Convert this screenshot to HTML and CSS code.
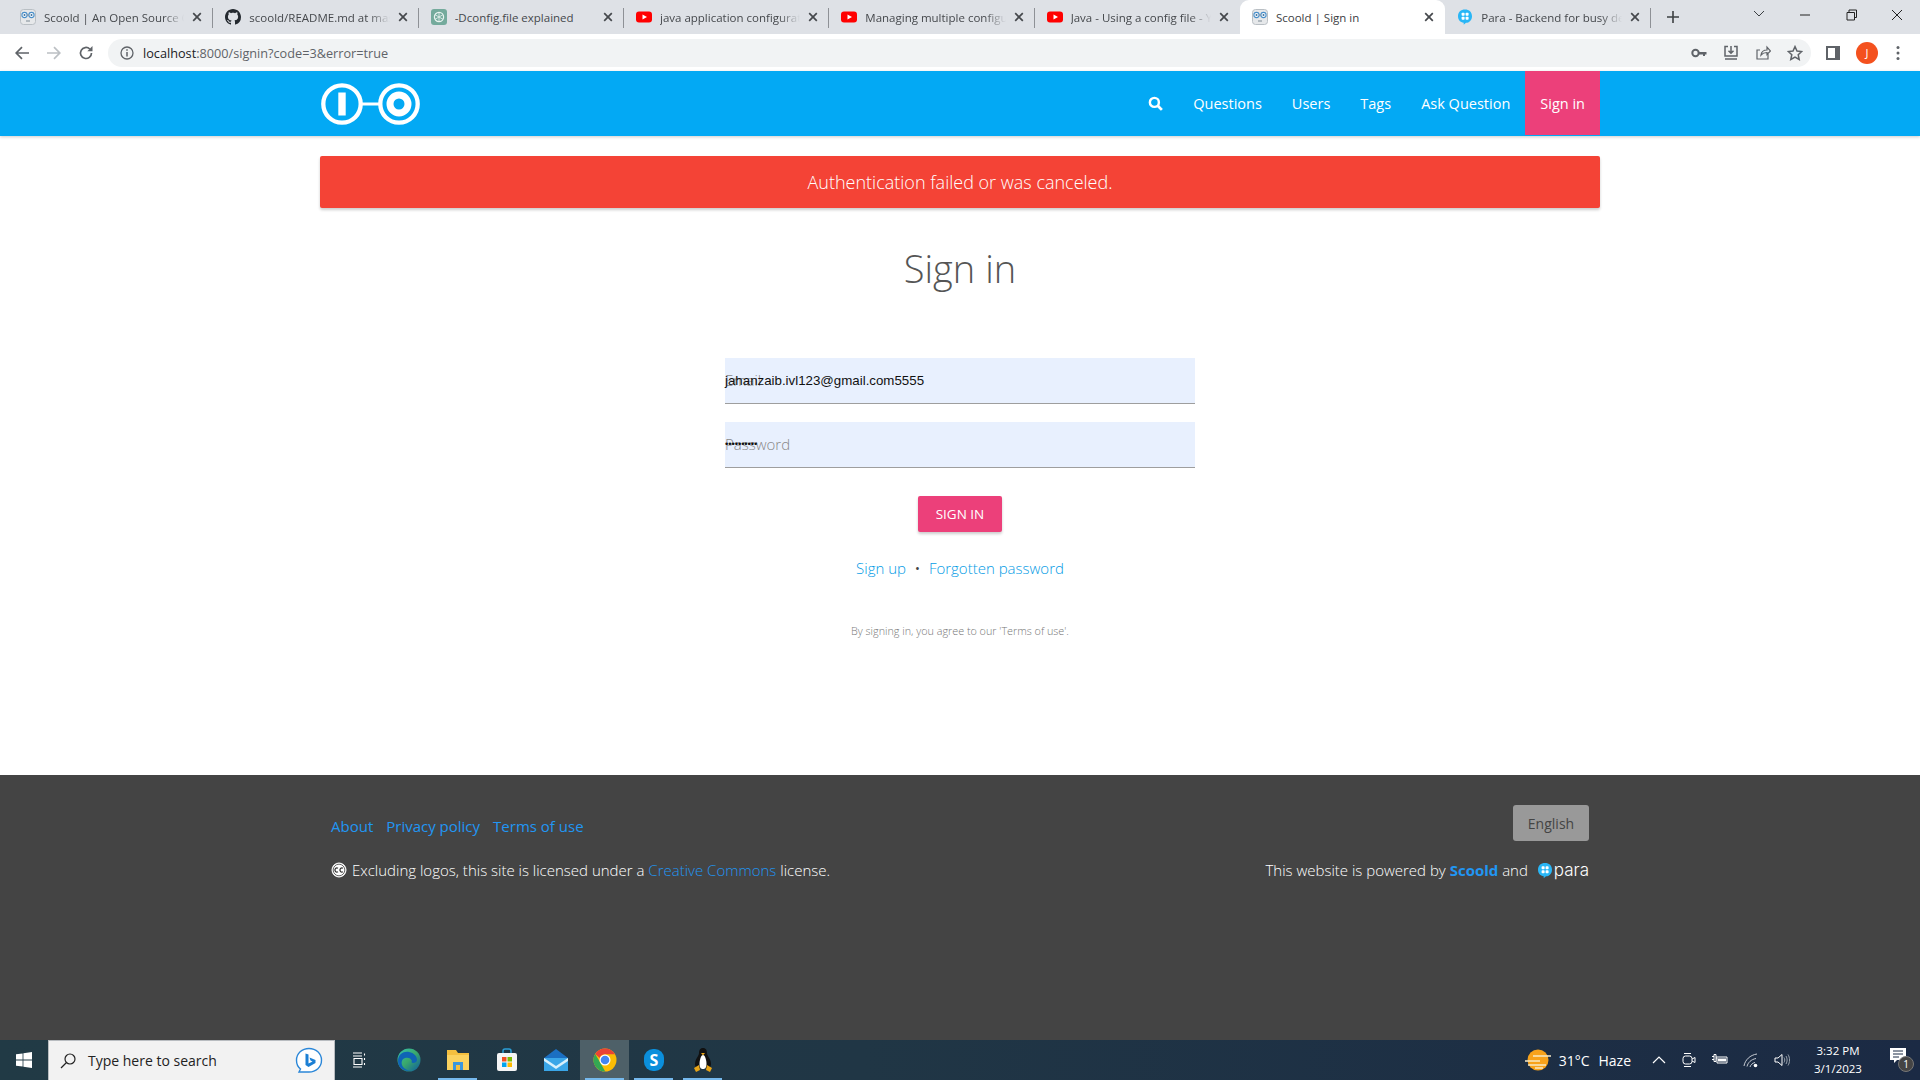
FILE: index.html
```html
<!DOCTYPE html>
<html lang="en">
<head>
<meta charset="utf-8">
<title>Scoold | Sign in</title>
<link rel="stylesheet" href="styles.css">
</head>
<body>
<svg class="defs" width="0" height="0" aria-hidden="true">
  <symbol id="scoold" viewBox="0 0 16 16">
    <rect x="0.5" y="0.5" width="15" height="15" rx="3" fill="#e6e8ea" stroke="#b9bfc4"/>
    <circle cx="4.5" cy="6" r="2.6" fill="#fff" stroke="#4a8fc9" stroke-width="1.1"/>
    <circle cx="11.5" cy="6" r="2.6" fill="#fff" stroke="#4a8fc9" stroke-width="1.1"/>
    <circle cx="4.5" cy="6" r="1" fill="#3d6f9b"/><circle cx="11.5" cy="6" r="1" fill="#3d6f9b"/>
    <path d="M7 6h2M6 12h4" stroke="#7d8a94" stroke-width="1"/>
  </symbol>
  <symbol id="yt" viewBox="0 0 16 16">
    <rect x="0" y="2.5" width="16" height="11" rx="3" fill="#f00"/>
    <path d="M6.5 5.5 11 8l-4.500 2.500z" fill="#fff"/>
  </symbol>
  <symbol id="x" viewBox="0 0 10 10">
    <path d="M1.200 1.200l7.600 7.600M8.800 1.200l-7.600 7.600" stroke="#45484c" stroke-width="1.700" fill="none"/>
  </symbol>
  <symbol id="bubble" viewBox="0 0 16 16">
    <path d="M8 0.500c4.200 0 7 2.700 7 6.700s-2.800 6.600-6 6.600l-2.300 2v-2.100C3.300 13.300 1 11 1 7.200 1 3.200 3.800 0.500 8 0.500z" fill="#29b6f6"/>
    <rect x="4.600" y="3.700" width="3" height="3" rx=".8" fill="#fff"/><rect x="8.600" y="3.700" width="3" height="3" rx=".8" fill="#fff"/>
    <rect x="4.600" y="7.700" width="3" height="3" rx=".8" fill="#fff"/><rect x="8.600" y="7.700" width="3" height="3" rx=".8" fill="#fff"/>
  </symbol>
</svg>

<div class="app">
  <header class="tabstrip">
    <div class="tab"><svg class="fav"><use href="#scoold"/></svg><span class="tab-title">Scoold | An Open Source Q&amp;A</span><svg class="tab-x"><use href="#x"/></svg></div>
    <div class="tab"><svg class="fav" viewBox="0 0 16 16"><path fill="#24292f" d="M8 0C3.580 0 0 3.580 0 8c0 3.540 2.290 6.530 5.470 7.590.4.070.55-.17.55-.38 0-.19-.01-.82-.01-1.490-2.010.37-2.530-.49-2.690-.94-.09-.23-.48-.94-.82-1.130-.28-.15-.68-.52-.01-.53.63-.01 1.080.58 1.230.82.720 1.210 1.870.87 2.330.66.070-.52.280-.87.510-1.070-1.780-.2-3.640-.89-3.640-3.950 0-.87.310-1.590.820-2.150-.08-.2-.36-1.020.080-2.120 0 0 .67-.21 2.200.82.640-.18 1.320-.27 2-.27.680 0 1.360.09 2 .27 1.530-1.040 2.200-.82 2.200-.82.440 1.100.160 1.920.080 2.120.510.56.820 1.270.820 2.150 0 3.070-1.870 3.750-3.650 3.950.290.25.540.73.540 1.480 0 1.070-.01 1.930-.01 2.200 0 .21.150.46.550.38A8.013 8.013 0 0016 8c0-4.420-3.580-8-8-8z"/></svg><span class="tab-title">scoold/README.md at master</span><svg class="tab-x"><use href="#x"/></svg></div>
    <div class="tab"><svg class="fav" viewBox="0 0 16 16"><rect width="16" height="16" rx="3" fill="#74aa9c"/><circle cx="8" cy="8" r="4.600" fill="none" stroke="#e9f3f0" stroke-width="1.200"/><path d="M8 3.400v9.200M4 5.700l8 4.600M12 5.700l-8 4.600" stroke="#e9f3f0" stroke-width=".8"/></svg><span class="tab-title plain">-Dconfig.file explained</span><svg class="tab-x"><use href="#x"/></svg></div>
    <div class="tab"><svg class="fav"><use href="#yt"/></svg><span class="tab-title">java application configuration</span><svg class="tab-x"><use href="#x"/></svg></div>
    <div class="tab"><svg class="fav"><use href="#yt"/></svg><span class="tab-title">Managing multiple configuration</span><svg class="tab-x"><use href="#x"/></svg></div>
    <div class="tab no-sep"><svg class="fav"><use href="#yt"/></svg><span class="tab-title">Java - Using a config file - YouTube</span><svg class="tab-x"><use href="#x"/></svg></div>
    <div class="tab active"><svg class="fav"><use href="#scoold"/></svg><span class="tab-title plain">Scoold | Sign in</span><svg class="tab-x"><use href="#x"/></svg></div>
    <div class="tab"><svg class="fav"><use href="#bubble"/></svg><span class="tab-title">Para - Backend for busy developers</span><svg class="tab-x"><use href="#x"/></svg></div>
    <svg class="newtab" viewBox="0 0 12 12"><path d="M6 0v12M0 6h12" stroke="#3c4043" stroke-width="1.600"/></svg>
    <div class="win-controls">
      <svg class="win-btn" viewBox="0 0 46 30"><path d="M18 11l5 5 5-5" fill="none" stroke="#3c4043" stroke-width="1"/></svg>
      <svg class="win-btn" viewBox="0 0 46 30"><path d="M18 15h10" stroke="#222" stroke-width="1"/></svg>
      <svg class="win-btn" viewBox="0 0 46 30"><path d="M19 12.500h7.500V20H19zM21 12.500V10h7.500v7.500h-2" fill="none" stroke="#222" stroke-width="1"/></svg>
      <svg class="win-btn" viewBox="0 0 46 30"><path d="M18 10l10 10M28 10L18 20" stroke="#222" stroke-width="1"/></svg>
    </div>
  </header>

  <div class="toolbar">
    <svg class="tb-icon" viewBox="0 0 16 16"><path d="M15 8H2.500M8 2.200 2.200 8 8 13.800" fill="none" stroke="#5f6368" stroke-width="1.700"/></svg>
    <svg class="tb-icon" viewBox="0 0 16 16"><path d="M1 8h12.500M8 2.200 13.800 8 8 13.800" fill="none" stroke="#bcc0c4" stroke-width="1.700"/></svg>
    <svg class="tb-icon" viewBox="0 0 16 16"><path d="M13.500 8a5.500 5.500 0 1 1-1.700-4" fill="none" stroke="#5f6368" stroke-width="1.700"/><path d="M14.500 1v5.200H9.300z" fill="#5f6368"/></svg>
    <div class="omnibox">
      <svg class="info" viewBox="0 0 14 14"><circle cx="7" cy="7" r="6" fill="none" stroke="#5f6368" stroke-width="1.300"/><path d="M7 6v4.500M7 3.300v1.500" stroke="#5f6368" stroke-width="1.500"/></svg>
      <span class="url"><b>localhost</b>:8000/signin?code=3&amp;error=true</span>
      <span class="omni-right">
        <svg class="omni-icon" viewBox="0 0 16 16"><circle cx="4.500" cy="8" r="3.200" fill="none" stroke="#5f6368" stroke-width="2"/><path d="M7.500 7h8v2.500h-1.500V11h-2V9.500H7.500z" fill="#5f6368"/></svg>
        <svg class="omni-icon" viewBox="0 0 16 16"><path d="M5 1.500H2v9.500h12V1.500h-3M8 1v7M5.500 5.800 8 8.300l2.500-2.500M2 14h12" fill="none" stroke="#5f6368" stroke-width="1.500"/></svg>
        <svg class="omni-icon" viewBox="0 0 16 16"><path d="M13 9v5H2V5h3M6 10c.5-3.500 3-5 6-5V2l3.500 4L12 9.500V7.500c-2.500 0-4.500.8-6 2.500z" fill="none" stroke="#5f6368" stroke-width="1.200"/></svg>
        <svg class="omni-icon" viewBox="0 0 16 16"><path d="M8 1.600l2 4.400 4.700.5-3.500 3.200 1 4.700L8 12l-4.200 2.400 1-4.700L1.300 6.500 6 6z" fill="none" stroke="#5f6368" stroke-width="1.500"/></svg>
      </span>
    </div>
    <svg class="side-panel" viewBox="0 0 14 14"><path d="M1 1h12v12H1z" fill="none" stroke="#5f6368" stroke-width="2"/><path d="M9 1h4v12H9z" fill="#5f6368"/></svg>
    <span class="avatar">J</span>
    <svg class="kebab" viewBox="0 0 4 16"><circle cx="2" cy="2.500" r="1.500" fill="#5f6368"/><circle cx="2" cy="8" r="1.500" fill="#5f6368"/><circle cx="2" cy="13.500" r="1.500" fill="#5f6368"/></svg>
  </div>

  <nav class="navbar">
    <div class="container nav-inner">
      <svg class="logo" viewBox="0 0 100 44">
        <circle cx="22" cy="22" r="18.700" fill="none" stroke="#fff" stroke-width="4.300"/>
        <rect x="18.300" y="10.500" width="7.400" height="23" fill="#fff"/>
        <path d="M40 22h20" stroke="#fff" stroke-width="3"/>
        <circle cx="79" cy="22" r="18.700" fill="none" stroke="#fff" stroke-width="4.300"/>
        <circle cx="79" cy="22" r="9" fill="none" stroke="#fff" stroke-width="7"/>
      </svg>
      <div class="nav-links">
        <a class="nav-link"><svg class="search" viewBox="0 0 16 16"><circle cx="6.800" cy="6.800" r="4.800" fill="none" stroke="#fff" stroke-width="2.600"/><path d="M10.400 10.400l4.400 4.400" stroke="#fff" stroke-width="3"/></svg></a>
        <a class="nav-link">Questions</a>
        <a class="nav-link">Users</a>
        <a class="nav-link">Tags</a>
        <a class="nav-link">Ask Question</a>
        <a class="nav-link signin">Sign in</a>
      </div>
    </div>
  </nav>

  <main class="main">
    <div class="container">
      <div class="alert">Authentication failed or was canceled.</div>
    </div>
    <h1 class="title">Sign in</h1>
    <form class="form">
      <div class="field">
        <span class="label">Email</span>
        <span class="value">jahanzaib.ivl123@gmail.com5555</span>
      </div>
      <div class="field">
        <span class="label pw">Password</span>
        <span class="value dots">••••••••••</span>
      </div>
      <div class="btn-row"><button class="btn" type="button">SIGN IN</button></div>
      <p class="links"><a>Sign up</a><span class="bullet">•</span><a>Forgotten password</a></p>
      <p class="terms">By signing in, you agree to our 'Terms of use'.</p>
    </form>
  </main>

  <footer class="footer">
    <div class="foot-inner">
      <div class="foot-row top">
        <div class="foot-links"><a>About</a><a>Privacy policy</a><a>Terms of use</a></div>
        <span class="lang">English</span>
      </div>
      <div class="foot-row">
        <div class="foot-text"><svg class="cc" viewBox="0 0 16 16"><circle cx="8" cy="8" r="7" fill="#fff" stroke="#fff"/><circle cx="8" cy="8" r="5.800" fill="#fff" stroke="#444" stroke-width=".8"/><path d="M7 6.300a2 2 0 1 0 0 3.400M12 6.300a2 2 0 1 0 0 3.400" fill="none" stroke="#333" stroke-width="1.300"/></svg>Excluding logos, this site is licensed under a <a>Creative Commons</a> license.</div>
        <div class="foot-text">This website is powered by <a class="strong">Scoold</a> and <svg class="para-icon"><use href="#bubble"/></svg><span class="para">para</span></div>
      </div>
    </div>
  </footer>

  <div class="taskbar">
    <svg class="start" viewBox="0 0 16 16"><path d="M0 2.300 6.600 1.400v6.200H0zM7.400 1.300 16 0v7.600H7.400zM0 8.400h6.600v6.200L0 13.700zM7.400 8.400H16V16l-8.600-1.300z" fill="#fff"/></svg>
    <div class="task-search">
      <svg class="mag" viewBox="0 0 16 16"><circle cx="10" cy="6" r="5" fill="none" stroke="#222" stroke-width="1.200"/><path d="M6.500 9.500 1 15" stroke="#222" stroke-width="1.300"/></svg>
      <span class="search-text">Type here to search</span>
      <svg class="bing" viewBox="0 0 28 28"><path d="M14 1.500c7 0 12.500 5 12.500 11.800S21 25 14 25H4l1.500-3C2.800 20 1.500 17 1.500 13.300 1.500 6.500 7 1.500 14 1.500z" fill="#fff" stroke="#2b87d8" stroke-width="1.400"/><path d="M10.500 6.500l3 1v9l4-2-2-1-1-3 6 2.500v3l-7 4-3-2z" fill="#1b7fd4"/></svg>
    </div>
    <div class="task-app"><svg class="app-icon small" viewBox="0 0 16 16"><path d="M1 1h9M1 4h9M2 6.500h8v6H2zM1 15h9M12.500 1.500v2M12.500 6v2M12.500 11v2" fill="none" stroke="#fff" stroke-width="1.100"/></svg></div>
    <div class="task-app"><svg class="app-icon" viewBox="0 0 24 24"><defs><linearGradient id="edge" x1="0" y1="0" x2="1" y2="1"><stop offset="0" stop-color="#35c1b0"/><stop offset=".5" stop-color="#3aa86b"/><stop offset="1" stop-color="#0c59a4"/></linearGradient></defs><circle cx="12" cy="12" r="11.500" fill="url(#edge)"/><path d="M1 13C1 6 7 3 12 4c5 1 8 4 8 8 0 2-2 3-4 3-1 0-2-1-1-2-1-3-4-4-7-3-3 1-4 4-3 7 1 3 5 6 9 5.500C7 24 1 20 1 13z" fill="#0f63b5"/></svg></div>
    <div class="task-app open"><svg class="app-icon" viewBox="0 0 24 24"><path d="M1 2h9l2 3h11v5H1z" fill="#f4bf3f"/><path d="M1 7h22v15H1z" fill="#fbd25f"/><path d="M7 14h10v8H7z" fill="#3a96dd"/><path d="M10 17h4v5h-4z" fill="#f4bf3f"/></svg></div>
    <div class="task-app"><svg class="app-icon" viewBox="0 0 24 24"><path d="M8 6V3a2 2 0 0 1 2-2h4a2 2 0 0 1 2 2v3" fill="none" stroke="#2a9fd8" stroke-width="1.500"/><rect x="2" y="5" width="20" height="18" rx="2" fill="#f5f5f5"/><path d="M7 9h4.500v4.500H7z" fill="#f25022"/><path d="M12.500 9H17v4.500h-4.500z" fill="#7fba00"/><path d="M7 14.500h4.500V19H7z" fill="#00a4ef"/><path d="M12.500 14.500H17V19h-4.500z" fill="#ffb900"/></svg></div>
    <div class="task-app"><svg class="app-icon" viewBox="0 0 24 24"><path d="M12 1 24 10v13H0V10z" fill="#1b6fc2"/><path d="M0 10h24v13H0z" fill="#3aa6e8"/><path d="M0 10l12 8 12-8v3L12 21 0 13z" fill="#d8f0fc"/></svg></div>
    <div class="task-app open current"><svg class="app-icon" viewBox="0 0 24 24"><circle cx="12" cy="12" r="11.500" fill="#fbbc04"/><path d="M12 .5a11.500 11.500 0 0 1 10 5.800H12A5.700 5.700 0 0 0 6.700 10L2.200 6A11.500 11.500 0 0 1 12 .5z" fill="#ea4335"/><path d="M2.200 6l5 8.500 5 9A11.500 11.500 0 0 1 2.200 6z" fill="#34a853"/><circle cx="12" cy="12" r="5.500" fill="#fff"/><circle cx="12" cy="12" r="4.300" fill="#4285f4"/></svg></div>
    <div class="task-app open"><svg class="app-icon" viewBox="0 0 24 24"><rect x="2" y="1" width="20" height="22" rx="9" fill="#0b8fdc"/><text class="skype" x="12" y="18" text-anchor="middle">S</text></svg></div>
    <div class="task-app open"><svg class="app-icon" viewBox="0 0 24 24"><path d="M12 0c3 0 4 2.500 4 5 0 3 4 6 4 11 0 2-1 3-2 4H6c-1-1-2-2-2-4 0-5 4-8 4-11 0-2.500 1-5 4-5z" fill="#111"/><path d="M12 7c2 0 3.500 5 3.500 9S14 21 12 21s-3.500-1-3.500-5S10 7 12 7z" fill="#fff"/><path d="M10 5h4l-2 2.500z" fill="#e9a517"/><path d="M3 20l5-3 1 5-4 2zM21 20l-5-3-1 5 4 2z" fill="#e9a517"/></svg></div>
    <div class="tray">
      <svg class="sun" viewBox="0 0 26 22"><circle cx="13" cy="11" r="10.500" fill="#f7a21b"/><path d="M0 12h15M3 16h18M8 7h18M10 19h8" stroke="#f8e9c4" stroke-width="1.500"/></svg>
      <span class="weather">31°C</span><span class="weather haze">Haze</span>
      <svg class="tray-icon caret" viewBox="0 0 14 8"><path d="M1 7l6-6 6 6" fill="none" stroke="#fff" stroke-width="1.200"/></svg>
      <svg class="tray-icon" viewBox="0 0 16 16"><path d="M3 1.500h7M3 14.500h7" stroke="#fff"/><rect x="2" y="4" width="9" height="8" rx="2.500" fill="none" stroke="#fff"/><path d="M11 7l3-1.500v5L11 9" fill="none" stroke="#fff"/></svg>
      <svg class="tray-icon" viewBox="0 0 16 16"><path d="M0 4.500h2M0 7.500h2M2 2.500h2v7H2zM4 6h1v5h10V5H4" fill="none" stroke="#fff"/><path d="M6 6.500h8v3H6z" fill="#fff"/></svg>
      <svg class="tray-icon" viewBox="0 0 16 16"><path d="M1 14C2 8 7 3 14 2M4 14.500c1-4 4-7 9-8M7 15c.5-2 2.500-4 5-4.500" fill="none" stroke="#c8cdd4"/><circle cx="12.500" cy="13.500" r="1.800" fill="#fff"/></svg>
      <svg class="tray-icon" viewBox="0 0 16 16"><path d="M1 6h3l4-3.500v11L4 10H1z" fill="none" stroke="#fff"/><path d="M10 5.500c1 1.500 1 3.500 0 5M12 4c1.500 2.500 1.500 5.500 0 8M14 2.500c2 3 2 8 0 11" fill="none" stroke="#9aa3ad"/></svg>
      <div class="clock"><span>3:32 PM</span><span>3/1/2023</span></div>
      <span class="notif"><svg class="notif-icon" viewBox="0 0 16 16"><path d="M0 0h16v12H7l-3 3v-3H0z" fill="#fff"/><path d="M3 3h10M3 6h10M3 9h6" stroke="#1b2a44"/></svg><span class="badge">1</span></span>
    </div>
  </div>
</div>
</body>
</html>
```
FILE: styles.css
```css
* { box-sizing: border-box; }
html, body { margin: 0; height: 100%; overflow: hidden; }
body { font-family: "Open Sans", "Noto Sans", sans-serif; background: #fff; color: #444; }
a { text-decoration: none; cursor: pointer; }
p, h1 { margin: 0; }
.defs { display: block; height: 0; }
.app { display: flex; flex-direction: column; height: 1080px; width: 1920px; }

/* browser chrome */
.tabstrip { display: flex; align-items: center; height: 34px; background: #dee1e6; padding-left: 8px; flex: none; }
.tab { position: relative; display: flex; align-items: center; width: 205.33px; height: 34px; padding: 0 10px 0 12px; font-size: 11.5px; color: #45484c; flex: none; }
.tab::after { content: ""; position: absolute; right: 0; top: 8px; height: 20px; width: 1px; background: #8e9196; }
.tab.no-sep::after, .tab.active::after { display: none; }
.tab.active { background: #fff; border-radius: 9px 9px 0 0; color: #3c4043; }
.fav { width: 16px; height: 16px; flex: none; margin-right: 8px; }
.tab-title { flex: 1; min-width: 0; white-space: nowrap; overflow: hidden; -webkit-mask-image: linear-gradient(90deg, #000 85%, transparent); mask-image: linear-gradient(90deg, #000 85%, transparent); }
.tab-title.plain { -webkit-mask-image: none; mask-image: none; }
.tab-x { width: 10px; height: 10px; flex: none; margin: 0 1px 0 8px; }
.newtab { width: 12px; height: 12px; margin-left: 16px; flex: none; }
.win-controls { display: flex; margin-left: auto; align-self: flex-start; }
.win-btn { width: 46px; height: 30px; display: block; }

.toolbar { display: flex; align-items: center; height: 37px; background: #fff; padding-left: 14px; flex: none; }
.tb-icon { width: 16px; height: 16px; margin-right: 16px; flex: none; }
.omnibox { display: flex; align-items: center; width: 1703px; height: 28px; margin-left: -2px; background: #f1f3f4; border-radius: 14px; padding: 0 0 0 12px; flex: none; }
.info { width: 14px; height: 14px; flex: none; margin-right: 9px; }
.url { font-size: 12.7px; color: #5f6368; white-space: nowrap; }
.url b { font-weight: 400; color: #202124; }
.omni-right { display: flex; gap: 16px; margin-left: auto; margin-right: 8px; }
.omni-icon { width: 16px; height: 16px; display: block; }
.side-panel { width: 14px; height: 14px; margin-left: 15px; flex: none; }
.avatar { width: 22px; height: 22px; margin-left: 16px; border-radius: 50%; background: #f4511e; color: #fff; font-size: 11px; display: flex; align-items: center; justify-content: center; flex: none; }
.kebab { width: 4px; height: 16px; margin-left: 18px; flex: none; }

/* site nav */
.navbar { height: 65px; background: #03a9f4; flex: none; box-shadow: 0 1px 3px rgba(0,0,0,.2); }
.container { width: 1280px; margin: 0 auto; }
.nav-inner { display: flex; align-items: stretch; justify-content: space-between; height: 64px; }
.logo { width: 100px; height: 44px; align-self: center; display: block; margin-top: 2px; }
.nav-links { display: flex; align-items: stretch; }
.nav-link { display: flex; align-items: center; padding: 0 15px; color: #fff; font-size: 14.500px; }
.search { width: 15px; height: 15px; }
.signin { background: #ec407a; }

/* main */
.main { flex: 1; min-height: 0; padding-top: 20px; display: flex; flex-direction: column; align-items: center; }
.alert { height: 52px; background: #f44336; color: #fff; border-radius: 2px; font-size: 18px; font-weight: 300; display: flex; align-items: center; justify-content: center; box-shadow: 0 2px 3px rgba(0,0,0,.2); }
.title { font-size: 38px; font-weight: 300; color: #555; line-height: 52px; margin-top: 34px; text-align: center; }
.form { width: 470px; margin-top: 64px; }
.field { position: relative; height: 46px; background: #e8f0fe; border-bottom: 1px solid #9e9e9e; margin-bottom: 18px; }
.label { position: absolute; left: 0; top: 12px; font-size: 15px; font-weight: 300; color: #888; }
.value { position: absolute; left: 0; top: 15px; font-family: "Liberation Sans", Arial, sans-serif; font-size: 13.300px; color: #111; white-space: nowrap; }
.dots { top: 16px; font-size: 9.500px; letter-spacing: -.1px; }
.btn-row { display: flex; justify-content: center; margin-top: 28px; }
.btn { width: 84px; height: 36px; border: 0; border-radius: 2px; background: #ec407a; color: #fff; font-family: inherit; font-size: 13.500px; padding: 0; box-shadow: 0 2px 3px rgba(0,0,0,.2); }
.links { display: flex; justify-content: center; align-items: center; margin-top: 25px; font-size: 15px; font-weight: 300; line-height: 22px; }
.links a { color: #039be5; }
.bullet { color: #444; margin: 0 9px; font-weight: 400; font-size: 13px; }
.terms { margin-top: 44px; text-align: center; font-size: 10.800px; font-weight: 300; color: #777; line-height: 16px; }

/* footer */
.footer { height: 265px; background: #444; color: #fff; flex: none; padding: 30px 331px 0; }
.foot-inner { display: flex; flex-direction: column; }
.foot-row { display: flex; justify-content: space-between; align-items: center; font-size: 15px; }
.foot-row.top { height: 36px; margin-bottom: 18px; }
.foot-links { display: flex; gap: 13px; margin-top: 5px; }
.footer a { color: #2196f3; }
.lang { width: 76px; height: 36px; background: #999; color: #444; border-radius: 3px; font-size: 14px; display: flex; align-items: center; justify-content: center; }
.foot-text { display: flex; align-items: center; white-space: pre; font-weight: 300; line-height: 22px; height: 22px; }
.cc { width: 16px; height: 16px; margin-right: 5px; flex: none; }
.strong { font-weight: 700; }
.para-icon { width: 16px; height: 17px; flex: none; margin: 0 1px 0 5px; }
.para { font-family: "Inter", sans-serif; font-size: 17px; font-weight: 300; line-height: 20px; }

/* taskbar */
.taskbar { display: flex; align-items: stretch; height: 40px; flex: none; background: linear-gradient(90deg, #213a45 0%, #203645 45%, #1b2a44 100%); color: #fff; }
.start { width: 16px; height: 16px; align-self: center; margin: 0 16px; flex: none; }
.task-search { display: flex; align-items: center; width: 287px; background: #f2f2f2; border: 1px solid #b8bcc0; border-width: 1px 1px 0; padding-left: 11px; flex: none; }
.mag { width: 16px; height: 16px; flex: none; }
.search-text { font-size: 14px; color: #222; margin-left: 12px; }
.bing { width: 28px; height: 28px; margin-left: auto; margin-right: 11px; }
.task-app { position: relative; display: flex; align-items: center; justify-content: center; width: 49px; flex: none; }
.task-app:first-of-type { margin-left: 0; }
.task-app.open::after { content: ""; position: absolute; left: 5px; right: 5px; bottom: 0; height: 2px; background: #76b9ed; }
.task-app.current { background: #4e6068; }
.app-icon { width: 24px; height: 24px; }
.app-icon.small { width: 16px; height: 16px; }
.skype { font-family: "Open Sans", sans-serif; font-size: 16px; font-weight: 700; fill: #fff; }
.tray { margin-left: auto; display: flex; align-items: center; padding-right: 6px; }
.sun { width: 26px; height: 22px; flex: none; }
.weather { font-size: 14px; margin-left: 8px; }
.haze { margin-left: 9px; }
.tray-icon { width: 16px; height: 16px; margin-left: 15px; flex: none; }
.caret { width: 14px; height: 8px; margin-left: 21px; }
.clock { display: flex; flex-direction: column; align-items: center; font-size: 11.500px; line-height: 18px; margin-left: 14px; width: 68px; }
.notif { position: relative; display: block; width: 24px; height: 24px; margin-left: 18px; }
.notif-icon { width: 16px; height: 16px; display: block; }
.badge { position: absolute; right: 0; bottom: 0; width: 16px; height: 16px; border-radius: 50%; background: #444; border: 1px solid #777; font-size: 10px; display: flex; align-items: center; justify-content: center; }
```
